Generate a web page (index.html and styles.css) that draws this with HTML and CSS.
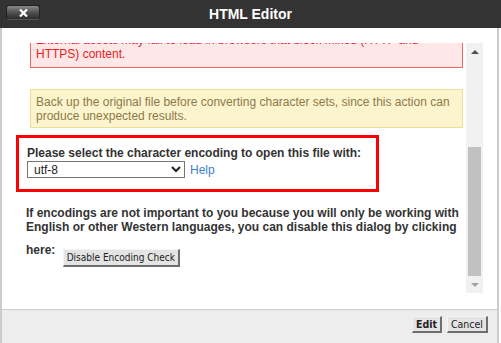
FILE: index.html
```html
<!DOCTYPE html>
<html lang="en">

<head>
    <meta charset="UTF-8">
    <title>HTML Editor</title>
    <link rel="stylesheet" href="styles.css">
</head>

<body>
    <div class="titlebar">
        <div class="titlebar-left">
            <button class="close" title="Close">
                <svg width="9" height="8" viewBox="0 0 9 8"><path d="M1 0.5 L8 7.5 M8 0.5 L1 7.5" stroke="#fff" stroke-width="2.2" fill="none"/></svg>
            </button>
        </div>
        <h1>HTML Editor</h1>
        <div></div>
    </div>

    <div class="dialog">
        <div class="dialog-body">
            <div class="scroller">
                <div class="viewport">
                    <div class="alert alert-error">
                        External assets may fail to load in browsers that block mixed (HTTP and HTTPS) content.
                    </div>
                    <div class="alert alert-warn">
                        Back up the original file before converting character sets, since this action can produce unexpected results.
                    </div>
                    <div class="encoding">
                        <label for="charset">Please select the character encoding to open this file with:</label>
                        <div class="encoding-row">
                            <select id="charset">
                                <option>utf-8</option>
                                <option>iso-8859-1</option>
                                <option>windows-1252</option>
                            </select>
                            <a href="#" class="help">Help</a>
                        </div>
                    </div>
                    <p class="note">If encodings are not important to you because you will only be working with English or other Western languages, you can disable this dialog by clicking here: <button class="btn btn-disable">Disable Encoding Check</button></p>
                </div>
                <div class="scrollbar">
                    <div class="sb-btn">
                        <svg width="8" height="4" viewBox="0 0 8 4"><path d="M0 4 L4 0 L8 4 Z" fill="#505050"/></svg>
                    </div>
                    <div class="sb-track">
                        <div class="sb-thumb"></div>
                    </div>
                    <div class="sb-btn">
                        <svg width="8" height="4" viewBox="0 0 8 4"><path d="M0 0 L4 4 L8 0 Z" fill="#a3a3a3"/></svg>
                    </div>
                </div>
            </div>
        </div>
        <div class="footer">
            <button class="btn btn-edit">Edit</button>
            <button class="btn">Cancel</button>
        </div>
    </div>
</body>

</html>
```

FILE: styles.css
```css
* {
    box-sizing: border-box;
}

body {
    margin: 0;
    background-color: #fff;
    font-family: "Liberation Sans", Arial, sans-serif;
    font-size: 12px;
}

.titlebar {
    display: grid;
    grid-template-columns: 1fr auto 1fr;
    align-items: center;
    height: 28px;
    background-color: #333;
}

.titlebar-left {
    padding-left: 6px;
}

.close {
    display: flex;
    align-items: center;
    justify-content: center;
    width: 34px;
    height: 15px;
    margin-top: -3px;
    padding: 0;
    border: 1px solid #222;
    border-bottom-color: #555;
    border-radius: 3px;
    background: linear-gradient(#8a8a8a, #555 45%, #2c2c2c);
}

h1 {
    margin: 0;
    color: #fff;
    font-size: 14px;
    font-weight: 700;
}

.dialog {
    width: 499px;
    border-left: 2px solid #ccc;
    border-right: 2px solid #ccc;
}

.dialog-body {
    height: 281px;
    padding: 15px 14px 16px 14px;
}

.scroller {
    display: flex;
    height: 250px;
}

.viewport {
    flex: 1;
    display: flex;
    flex-direction: column;
    justify-content: flex-end;
    overflow: hidden;
    padding-bottom: 26px;
}

.alert {
    flex-shrink: 0;
    margin: 0 3px 0 14px;
    padding: 5px 6px 6px 5px;
    line-height: 14px;
    border: 1px solid;
}

.alert-error {
    color: #e8211f;
    background-color: #ffe7e7;
    border-color: #f26565;
}

.alert-warn {
    margin-top: 21px;
    padding-bottom: 4px;
    color: #8c7a48;
    background-color: #fcf4cd;
    border-color: #ebdf95;
}

.encoding {
    width: 363px;
    margin-top: 7px;
    padding: 8px 8px 11px 8px;
    border: 3px solid #f00;
    color: #333;
}

.encoding label {
    display: block;
    font-weight: 700;
    line-height: 14px;
}

.encoding-row {
    display: flex;
    align-items: center;
    margin-top: 1px;
}

select {
    width: 158px;
    height: 17px;
    padding: 0 0 0 2px;
    font-family: "Liberation Sans", Arial, sans-serif;
    font-size: 12px;
    color: #222;
    border: 1px solid #767676;
    border-radius: 0;
    background-color: #fff;
}

.help {
    margin-left: 5px;
    color: #3d80d1;
    text-decoration: none;
}

.note {
    margin: 14px 3px 0 10px;
    color: #333;
    font-weight: 700;
    line-height: 14px;
}

.btn {
    padding: 0 3px;
    font-family: "DejaVu Sans Condensed", "DejaVu Sans", sans-serif;
    font-size: 10px;
    color: #222;
    background-color: #e4e4e4;
    border-style: solid;
    border-width: 1px 2px 2px 1px;
    border-color: #f4f4f4 #6e6e6e #6e6e6e #f4f4f4;
}

.btn-disable {
    height: 18px;
    margin: 15px 0 0 4px;
    vertical-align: -7px;
}

.scrollbar {
    display: flex;
    flex-direction: column;
    width: 17px;
    background-color: #f1f1f1;
}

.sb-btn {
    display: flex;
    align-items: center;
    justify-content: center;
    height: 17px;
}

.sb-track {
    flex: 1;
    display: flex;
    flex-direction: column;
    justify-content: flex-end;
    padding: 0 2px;
}

.sb-thumb {
    height: 129px;
    background-color: #c1c1c1;
}

.footer {
    display: flex;
    justify-content: flex-end;
    gap: 5px;
    height: 34px;
    padding: 6px 9px 0 0;
    background-color: #ededed;
    border-top: 1px solid #ccc;
}

.footer .btn {
    height: 17px;
    font-size: 10.5px;
}

.btn-edit {
    font-weight: 700;
}
```
